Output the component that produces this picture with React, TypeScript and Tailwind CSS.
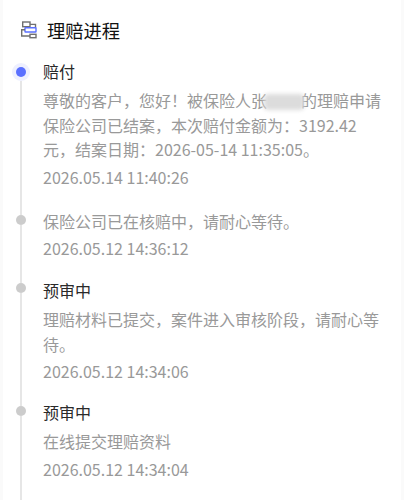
const font = { fontFamily: '"Noto Sans CJK SC", "Noto Sans", sans-serif' };

function Item({
  title,
  active,
  time,
  railClass,
  bodyClass,
  children,
}: {
  title?: string;
  active?: boolean;
  time: string;
  railClass: string;
  bodyClass: string;
  children: React.ReactNode;
}) {
  return (
    <div className="flex items-stretch gap-[13px]">
      <div className="flex w-[18px] shrink-0 flex-col items-center">
        <div className={`w-[1.5px] bg-[#e6e6e6] ${railClass}`} />
        {active ? (
          <div className="flex h-[18px] w-[18px] items-center justify-center rounded-full bg-[#eef0ff]">
            <div className="h-[10px] w-[10px] rounded-full bg-[#5a70ff]" />
          </div>
        ) : (
          <div className="h-[10px] w-[10px] rounded-full bg-[#cccccc]" />
        )}
        <div className="w-[1.5px] flex-1 bg-[#e6e6e6]" />
      </div>
      <div className={`min-w-0 flex-1 ${bodyClass}`}>
        {title && <div className="mb-[5px] text-[16px] leading-[24px] text-[#2a2a2a]">{title}</div>}
        <div className="text-[16px] leading-[24.5px] text-[#999999]">{children}</div>
        <div className="mt-[3px] text-[16px] leading-[24px] text-[#999999]">{time}</div>
      </div>
    </div>
  );
}

export default function App() {
  return (
    <div className="h-[500px] w-[404px] overflow-hidden bg-[#fafafa] px-[3px]" style={font}>
      <div className="h-full bg-white">
        <div className="flex items-center gap-[9px] pl-[17px] pt-[17px]">
          <svg width="18" height="18" viewBox="0 0 18 18" fill="none" strokeWidth="1.4">
            <rect x="2.7" y="1" width="7.3" height="4.7" stroke="#707070" />
            <path d="M10 3.4H15.5V6.7" stroke="#707070" />
            <rect x="5" y="6.7" width="11" height="4.3" rx="0.5" stroke="#5a70ff" />
            <path d="M5 8.8H1.7V15H10" stroke="#707070" />
            <rect x="10" y="13.3" width="6" height="3.4" stroke="#707070" />
          </svg>
          <div className="text-[18.3px] leading-[26px] text-[#111111]">理赔进程</div>
        </div>
        <div className="ml-[9px] mt-[16px] pr-[18px]">
          <Item title="赔付" active time="2026.05.14 11:40:26" railClass="h-[4px] opacity-0" bodyClass="pb-[20px]">
            尊敬的客户，您好！被保险人张
            <span className="-mx-[3px] inline-block h-[16px] w-[40px] rounded-[4px] bg-[#dcdcdc] align-[-3px] blur-[2px]" />
            的理赔申请保险公司已结案，本次赔付金额为：3192.42元，结案日期：2026-05-14 11:35:05。
          </Item>
          <Item time="2026.05.12 14:36:12" railClass="h-[6px]" bodyClass="pb-[18px]">
            保险公司已在核赔中，请耐心等待。
          </Item>
          <Item title="预审中" time="2026.05.12 14:34:06" railClass="h-[5px]" bodyClass="pb-[17px]">
            理赔材料已提交，案件进入审核阶段，请耐心等待。
          </Item>
          <Item title="预审中" time="2026.05.12 14:34:04" railClass="h-[6px]" bodyClass="pb-[40px]">
            在线提交理赔资料
          </Item>
        </div>
      </div>
    </div>
  );
}
